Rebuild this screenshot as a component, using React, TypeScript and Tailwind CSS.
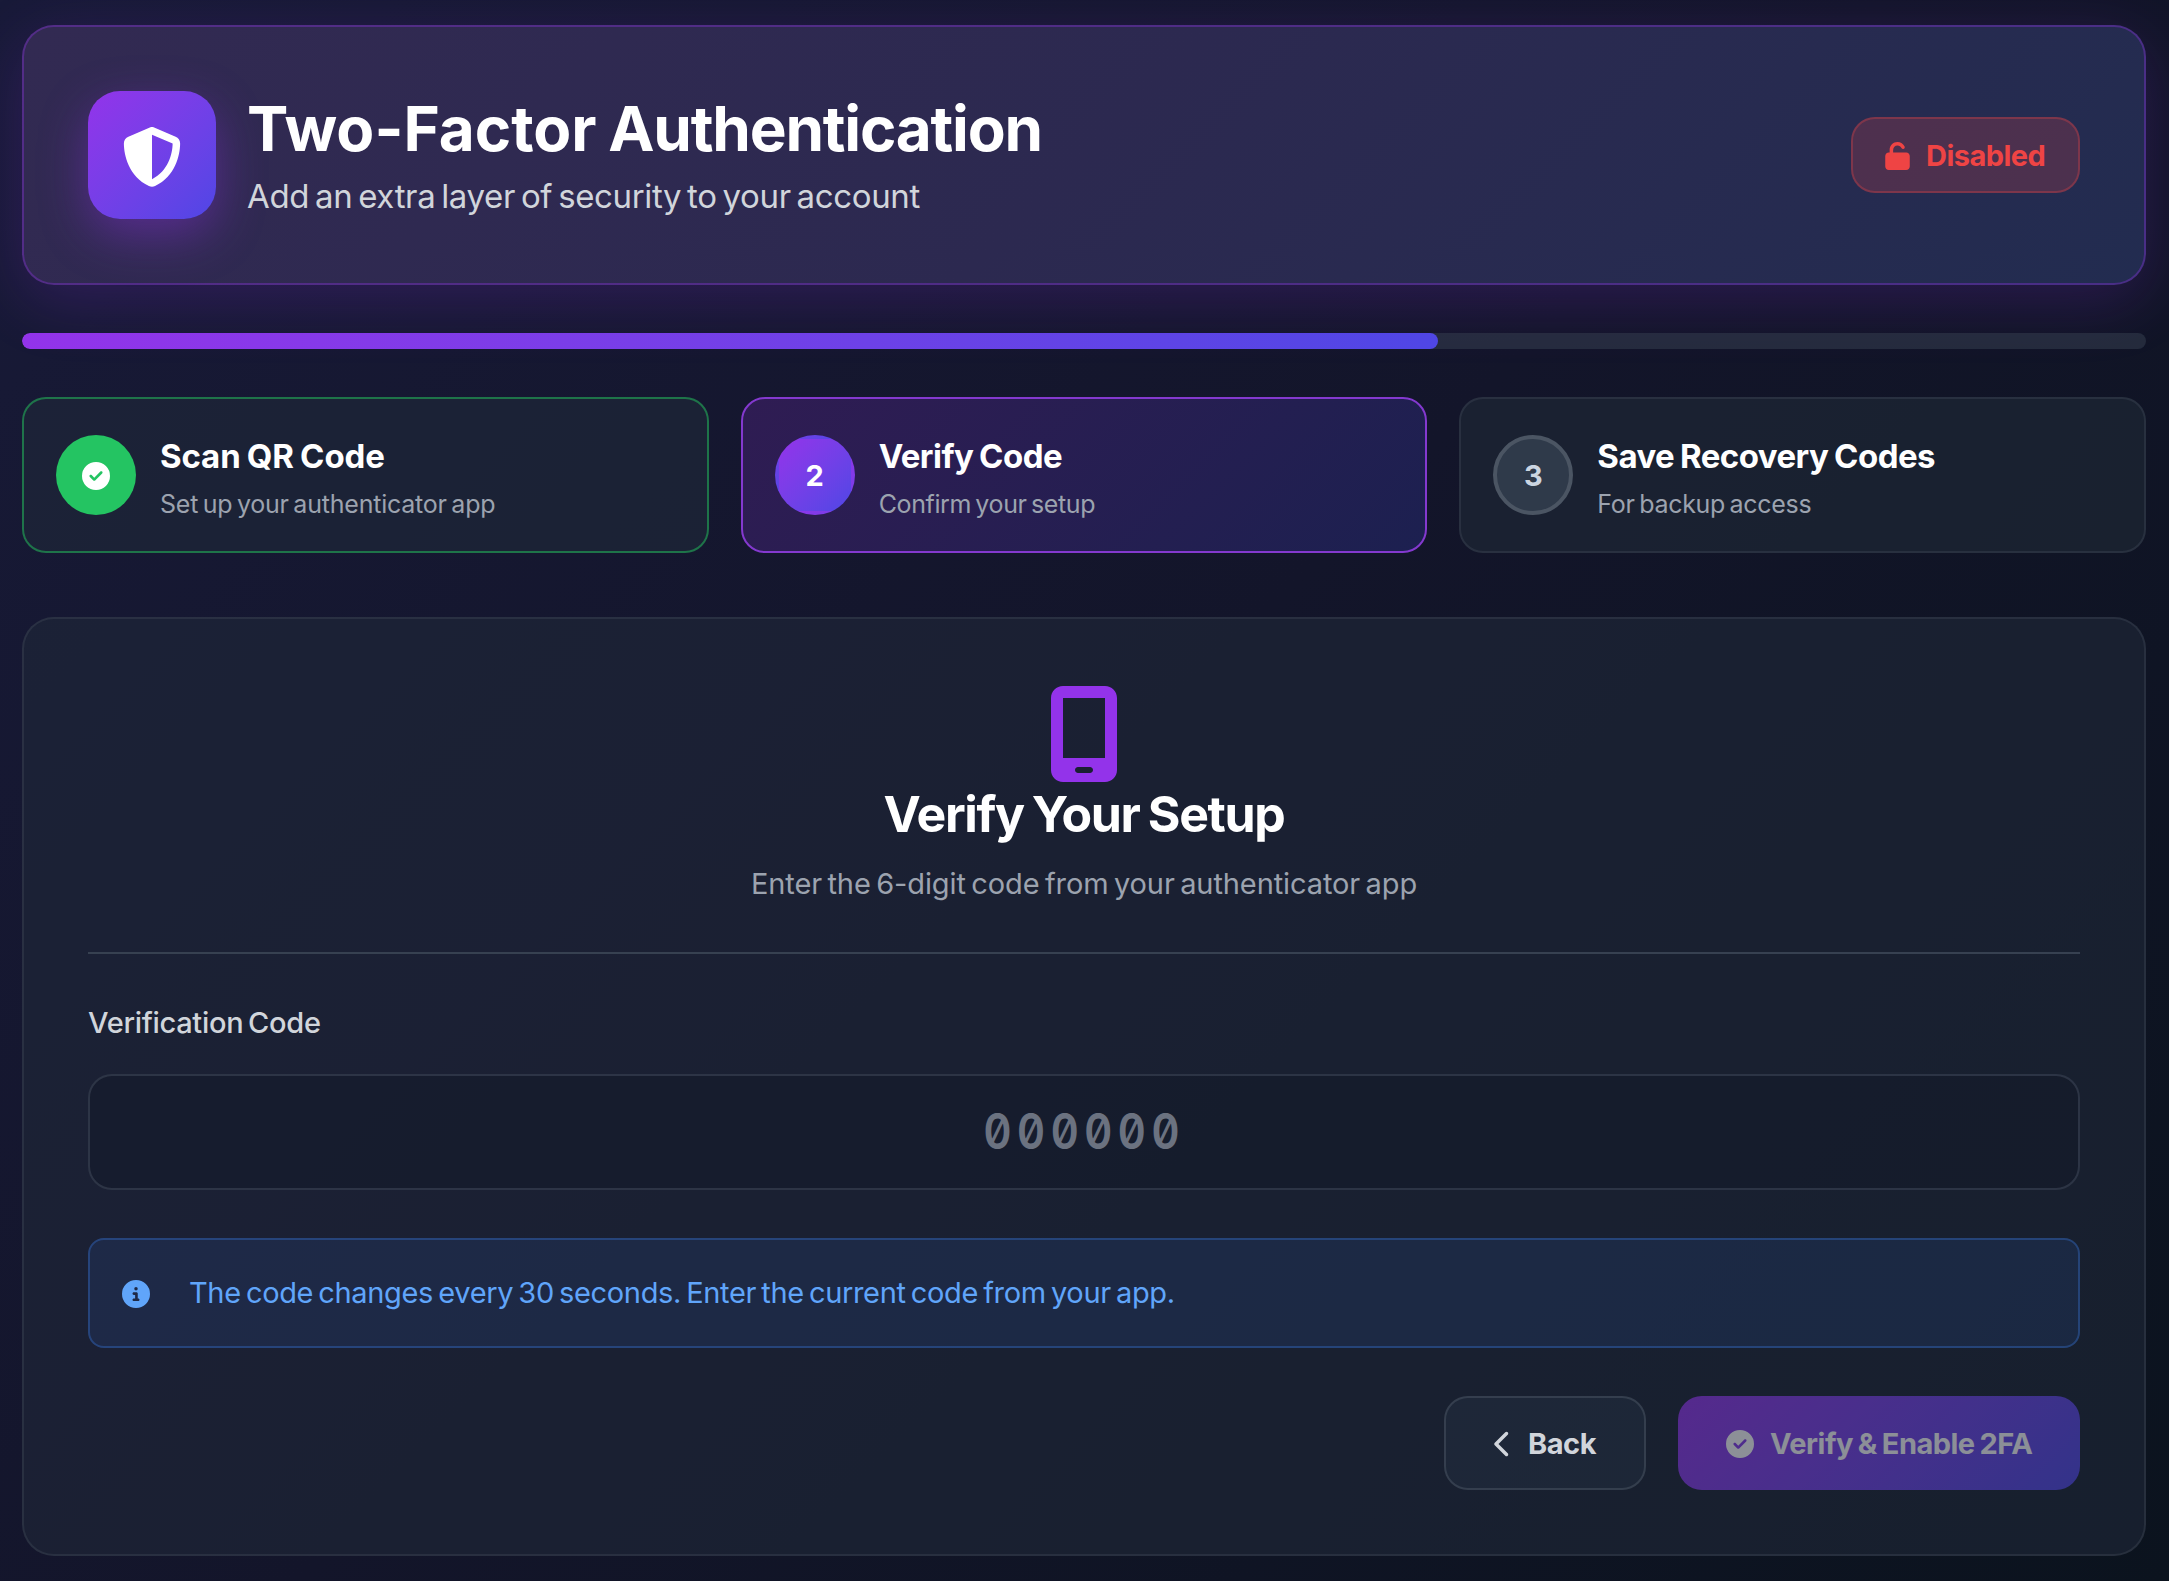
import { useState } from 'react'
import clsx from 'clsx'
import {
  FaChevronLeft,
  FaCircleCheck,
  FaCircleInfo,
  FaMobileScreen,
  FaShieldHalved,
  FaUnlock,
} from 'react-icons/fa6'

type StepState = 'done' | 'active' | 'pending'

const steps: { title: string; hint: string; state: StepState; titleClass: string; hintClass: string }[] = [
  {
    title: 'Scan QR Code',
    hint: 'Set up your authenticator app',
    state: 'done',
    titleClass: 'tracking-[-0.0035em]',
    hintClass: 'tracking-[-0.0087em]',
  },
  {
    title: 'Verify Code',
    hint: 'Confirm your setup',
    state: 'active',
    titleClass: 'tracking-[-0.0165em]',
    hintClass: 'tracking-[-0.0155em]',
  },
  {
    title: 'Save Recovery Codes',
    hint: 'For backup access',
    state: 'pending',
    titleClass: 'tracking-[-0.0165em]',
    hintClass: 'tracking-[-0.0115em]',
  },
]

const cardStyles: Record<StepState, string> = {
  done: 'bg-[#1f2839]/65 border-[#22c55e]/50',
  active: 'bg-linear-135 from-[#2f1c53] to-[#1c2050] border-[#8439cf]',
  pending: 'bg-[#1f2937]/60 border-[#4b5563]/30',
}

const circleStyles: Record<StepState, string> = {
  done: 'bg-[#24c462] text-white border-transparent',
  active: 'bg-linear-135 from-[#9333ea] to-[#4f46e5] text-white border-transparent',
  pending: 'bg-[#2f3a4a] text-[#cbd5e1] border-[#4b5563]',
}

function Header() {
  return (
    <header className="flex items-center justify-between h-[260px] px-16 rounded-[32px] border-2 border-[#9333ea]/35 bg-linear-135 from-[#322a52] via-[#2c2950] to-[#222c50] bg-origin-border shadow-[0_16px_64px_rgba(147,51,234,0.2)]">
      <div className="flex items-center gap-8">
        <div className="flex items-center justify-center size-32 pt-1 rounded-[32px] bg-linear-135 from-[#9333ea] to-[#4f46e5] shadow-[0_16px_48px_rgba(147,51,234,0.4)]">
          <FaShieldHalved className="size-[60px] text-white" />
        </div>
        <div className="whitespace-nowrap">
          <h1 className="-ml-px text-[62px] leading-[75px] font-bold [word-spacing:-0.05em] text-white">
            Two-Factor <span className="tracking-[-0.0195em]">Authentication</span>
          </h1>
          <p className="mt-[7px] -ml-px text-[33px] leading-[46px] tracking-[-0.0112em] [word-spacing:-0.09em] text-[#d1d5db]">
            Add an extra layer of security to your account
          </p>
        </div>
      </div>
      <div className="flex items-center gap-4 w-[229px] h-[76px] pt-px px-8 rounded-3xl border-2 border-[#ef4444]/30 bg-[#ef4444]/20 text-[#ef4444] whitespace-nowrap">
        <FaUnlock className="w-[25px] h-7 shrink-0" />
        <span className="text-[29px] font-bold tracking-[-0.0185em]">Disabled</span>
      </div>
    </header>
  )
}

function Progress({ done, total }: { done: number; total: number }) {
  return (
    <div className="mt-12 h-4 rounded-lg bg-[#374151]/50 overflow-hidden">
      <div
        className="h-full rounded-lg bg-linear-to-r from-[#9333ea] to-[#4f46e5]"
        style={{ width: `${(done / total) * 100}%` }}
      />
    </div>
  )
}

function Steps() {
  return (
    <div className="mt-12 grid grid-cols-3 gap-8">
      {steps.map(({ title, hint, state, titleClass, hintClass }, i) => (
        <div
          key={title}
          className={clsx('flex items-center gap-6 h-[156px] px-8 rounded-3xl border-2 bg-origin-border', cardStyles[state])}
        >
          <div
            className={clsx(
              'flex items-center justify-center size-20 pt-px shrink-0 rounded-full border-4 text-[29px] font-bold',
              circleStyles[state],
            )}
          >
            {state === 'done' ? <FaCircleCheck className="size-7" /> : i + 1}
          </div>
          <div className="whitespace-nowrap">
            <h3 className={clsx('text-[33px] leading-[50px] font-bold [word-spacing:-0.045em] text-white', titleClass)}>
              {title}
            </h3>
            <p className={clsx('mt-2 text-[25px] leading-[30px] [word-spacing:-0.09em] text-[#9ca3af]', hintClass)}>
              {hint}
            </p>
          </div>
        </div>
      ))}
    </div>
  )
}

export default function App() {
  const [code, setCode] = useState('')

  return (
    <div className="min-h-screen pt-[25px] pb-[25px] pl-[22px] pr-[23px] bg-linear-135 from-[#181a38] via-[#13152a] to-[#0b131e] font-['Inter',sans-serif]">
      <Header />
      <Progress done={2} total={3} />
      <Steps />

      <main className="mt-16 p-16 rounded-[32px] border-2 border-[#4b5563]/30 bg-[#1f2838]/60">
        <div className="flex flex-col items-center pt-[3px] pb-[47px] border-b-2 border-[#374151] whitespace-nowrap">
          <FaMobileScreen className="w-[72px] h-24 text-[#9333ea]" />
          <h2 className="mt-[2px] mb-px text-[50px] leading-[60px] font-bold tracking-[-0.0275em] [word-spacing:-0.045em] text-white">
            Verify Your Setup
          </h2>
          <p className="mt-[17px] text-[29px] leading-[43px] tracking-[-0.0035em] [word-spacing:-0.09em] text-[#9ca3af]">
            Enter the 6-digit code from your authenticator app
          </p>
        </div>

        <label
          htmlFor="code"
          className="block mt-[46px] text-[29px] leading-[45px] font-medium tracking-[-0.0105em] [word-spacing:-0.09em] text-[#d1d5db]"
        >
          Verification Code
        </label>
        <div className="mt-[29px] h-[116px] rounded-3xl border-2 border-[#4b5563]/45 bg-[#111827]/50">
          <input
            id="code"
            value={code}
            maxLength={6}
            placeholder="000000"
            onChange={(e) => setCode(e.target.value.replace(/\D/g, ''))}
            className="size-full pb-0.5 text-center text-[50px] font-semibold tracking-[5.8px] scale-x-[0.88] text-white placeholder:text-[#6b7280] outline-none [font-feature-settings:'zero','tnum']"
          />
        </div>

        <div className="flex items-center gap-[39px] mt-12 h-[110px] px-8 rounded-2xl border-2 border-[#3b82f6]/30 bg-[#3b82f6]/10 text-[#60a5fa]">
          <FaCircleInfo className="size-7 mt-0.5" />
          <span className="text-[29px] tracking-[-0.012em] [word-spacing:-0.09em] whitespace-nowrap">
            The code changes every 30 seconds. Enter the current code from your app.
          </span>
        </div>

        <div className="flex justify-end gap-8 mt-12 text-[29px] font-bold whitespace-nowrap">
          <button className="flex items-center gap-4 w-[202px] h-[94px] pt-px px-12 rounded-3xl border-2 border-[#4b5563]/50 bg-[#30475a]/20 text-[#d1d5db]">
            <FaChevronLeft className="w-[18px] h-7 shrink-0" />
            <span className="tracking-[-0.0166em]">Back</span>
          </button>
          <button
            disabled
            className="flex items-center gap-4 w-[402px] h-[94px] pt-px px-12 rounded-3xl bg-linear-135 from-[#9333ea] to-[#4f46e5] text-white opacity-50"
          >
            <FaCircleCheck className="size-7 shrink-0" />
            <span className="tracking-[-0.0185em] [word-spacing:-0.045em]">Verify & Enable 2FA</span>
          </button>
        </div>
      </main>
    </div>
  )
}
